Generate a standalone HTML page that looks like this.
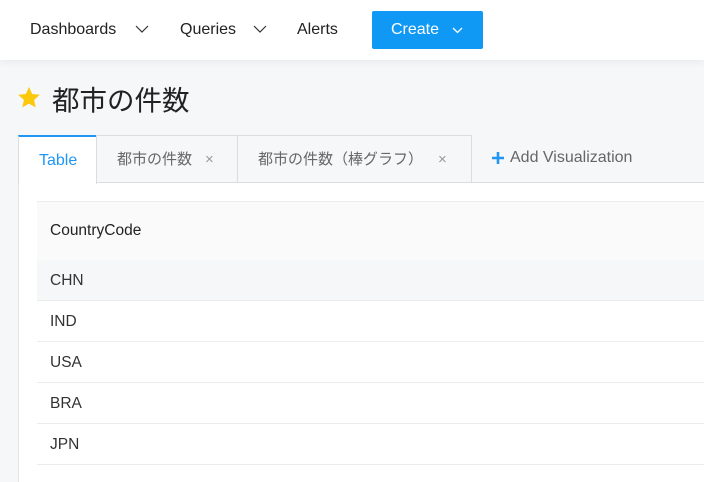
<!DOCTYPE html>
<html><head><meta charset="utf-8"><style>
*{box-sizing:border-box;margin:0;padding:0}
body{width:704px;height:472px;overflow:hidden;background:#f6f7f9;font-family:"Liberation Sans","Noto Sans CJK JP",sans-serif;position:relative;color:#333}
.hdr{position:absolute;left:0;top:0;width:704px;height:60px;background:#fff;box-shadow:0 2px 8px rgba(0,0,0,.06)}
.n{position:absolute;top:21px;font-size:16px;color:#222}
.chev{position:absolute;top:25px;width:14px;height:9px}
.btn{position:absolute;left:372px;top:11px;width:111px;height:38px;background:#0f99f5;border-radius:2px;color:#fff;font-size:16px}
.title{position:absolute;left:52px;top:78px;font-size:27.5px;color:#222}
.tab{position:absolute;top:135px;height:48px;border:1px solid #ddd;border-bottom:none;background:#f6f7f9;font-size:15px;color:#666;line-height:48px}
.panel{position:absolute;left:18px;top:182px;width:700px;height:300px;background:#fff;border-left:1px solid #e5e5e5;border-top:1px solid #e5e5e5}
.row{position:absolute;left:37px;width:680px;height:41px;border-bottom:1px solid #ececec;font-size:15.5px;color:#333;padding-left:13px;line-height:41px}
</style></head><body>
<div class="hdr">
<span class="n" style="left:30px;top:21px">Dashboards</span>
<svg class="chev" style="left:135px" viewBox="0 0 14 9"><path d="M1 1l6 6 6-6" fill="none" stroke="#333" stroke-width="1.2"/></svg>
<span class="n" style="left:180px;top:21px">Queries</span>
<svg class="chev" style="left:253px" viewBox="0 0 14 9"><path d="M1 1l6 6 6-6" fill="none" stroke="#333" stroke-width="1.2"/></svg>
<span class="n" style="left:297px;top:21px">Alerts</span>
<div class="btn"><span style="position:absolute;left:19px;top:10px">Create</span>
<svg style="position:absolute;left:80px;top:16px" width="11" height="7" viewBox="0 0 11 7"><path d="M1 1l4.5 4.5L10 1" fill="none" stroke="#fff" stroke-width="1.3"/></svg></div>
</div>
<svg style="position:absolute;left:17px;top:86px" width="24" height="23" viewBox="0 0 24 23"><path d="M12 1l3.2 7 7.6.8-5.7 5.1 1.6 7.5L12 17.6 5.3 21.4l1.6-7.5L1.2 8.8l7.6-.8z" fill="#fcc80a"/></svg>
<div class="title">都市の件数</div>
<div class="panel"></div>
<div class="tab" style="left:18px;width:79px;background:#fff;border-top:2px solid #2196f3;color:#2196f3;height:49px;padding-left:20px;font-size:16px">Table</div>
<div class="tab" style="left:96px;width:142px;border-bottom:1px solid #ddd;padding-left:20px">都市の件数<span style="position:absolute;left:108px;color:#999">×</span></div>
<div class="tab" style="left:237px;width:235px;border-bottom:1px solid #ddd;padding-left:20px">都市の件数（棒グラフ）<span style="position:absolute;left:200px;color:#999">×</span></div>
<div style="position:absolute;left:471px;top:182px;width:240px;border-top:1px solid #ddd"></div>
<svg style="position:absolute;left:492px;top:152px" width="12" height="12" viewBox="0 0 12 12"><path d="M6 0v12M0 6h12" stroke="#2196f3" stroke-width="2.6"/></svg>
<div style="position:absolute;left:510px;top:149px;font-size:16px;color:#666">Add Visualization</div>
<div class="row" style="top:201px;height:60px;background:#fafafa;border-top:1px solid #ececec;line-height:58px;color:#222">CountryCode</div>
<div class="row" style="top:260px;background:#f6f7f9">CHN</div>
<div class="row" style="top:301px">IND</div>
<div class="row" style="top:342px">USA</div>
<div class="row" style="top:383px">BRA</div>
<div class="row" style="top:424px">JPN</div>
</body></html>
